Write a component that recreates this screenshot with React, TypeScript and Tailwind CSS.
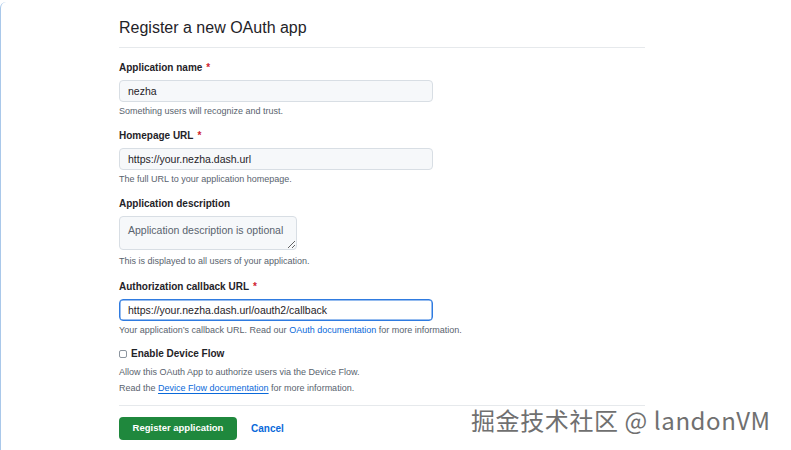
import React from "react";

const FONT = "font-['Liberation_Sans',Arial,sans-serif]";

type FieldProps = {
  label: string;
  required?: boolean;
  helper: React.ReactNode;
  children: React.ReactNode;
  className?: string;
  helperClass?: string;
};

const Field = ({ label, required, helper, children, className, helperClass }: FieldProps) => (
  <div className={className}>
    <div className="text-[10px] font-bold leading-[14px] text-[#1f2328]">
      {label}
      {required && <span className="ml-[4px] text-[#cf222e]">*</span>}
    </div>
    <div className="mt-[5px]">{children}</div>
    <div className={`${helperClass ?? "mt-[3px]"} text-[9px] leading-[12px] text-[#59636e]`}>{helper}</div>
  </div>
);

const inputBase =
  "block h-[22px] w-[314px] rounded-[4px] border px-[8px] text-[10.5px] text-[#1f2328] outline-none";

export default function App() {
  return (
    <div className={`${FONT} relative h-[450px] w-[791px] overflow-hidden bg-white`}>
      <div className="h-[448px] mt-[2px] rounded-tl-[6px] border-l border-[#a9c8ea]">
        <div className="ml-[118px] w-[526px]">
          <div className="border-b border-[#e6e9ec] pt-[16px] pb-[9px]">
            <h1 className="text-[16px] leading-[20px] text-[#1f2328]">Register a new OAuth app</h1>
          </div>

          <Field
            className="mt-[13px]"
            label="Application name"
            required
            helper="Something users will recognize and trust."
          >
            <input readOnly value="nezha" className={`${inputBase} border-[#d8dee4] bg-[#f6f8fa]`} />
          </Field>

          <Field
            className="mt-[12px]"
            label="Homepage URL"
            required
            helper="The full URL to your application homepage."
          >
            <input
              readOnly
              value="https://your.nezha.dash.url"
              className={`${inputBase} border-[#d8dee4] bg-[#f6f8fa]`}
            />
          </Field>

          <Field
            className="mt-[12px]"
            label="Application description"
            helperClass="mt-[5px]"
            helper="This is displayed to all users of your application."
          >
            <textarea
              readOnly
              placeholder="Application description is optional"
              className="block h-[34px] w-[178px] resize rounded-[4px] border border-[#d8dee4] bg-[#f6f8fa] px-[8px] pt-[6px] text-[10.5px] leading-[14px] text-[#1f2328] outline-none placeholder:text-[#59636e]"
            />
          </Field>

          <Field
            className="mt-[13px]"
            label="Authorization callback URL"
            required
            helper={
              <>
                Your application’s callback URL. Read our{" "}
                <span className="text-[#0969da]">OAuth documentation</span> for more information.
              </>
            }
          >
            <input
              readOnly
              value="https://your.nezha.dash.url/oauth2/callback"
              className={`${inputBase} border-[#2f7be0] bg-white shadow-[inset_0_0_0_0.5px_#2f7be0]`}
            />
          </Field>

          <div className="mt-[11px] flex items-center gap-[4px] text-[10px] font-bold leading-[14px] text-[#1f2328]">
            <span className="block h-[8px] w-[8px] rounded-[2px] border border-[#8c959f] bg-white" />
            <span>Enable Device Flow</span>
          </div>
          <div className="mt-[5px] text-[9px] leading-[12px] text-[#59636e]">
            Allow this OAuth App to authorize users via the Device Flow.
          </div>
          <div className="mt-[4px] text-[9px] leading-[12px] text-[#59636e]">
            Read the{" "}
            <span className="text-[#0969da] underline underline-offset-[2px]">Device Flow documentation</span> for
            more information.
          </div>

          <div className="mt-[11px] border-t border-[#e6e9ec]" />

          <div className="mt-[11px] flex items-center gap-[14px]">
            <button className="h-[23px] w-[118px] rounded-[4px] bg-[#1f883d] text-[9.5px] font-bold text-white">
              Register application
            </button>
            <span className="text-[10px] font-bold text-[#0969da]">Cancel</span>
          </div>
        </div>
      </div>

      <div className="absolute left-[471px] top-[404px] whitespace-pre font-['Noto_Sans_CJK_SC',sans-serif] text-[24px] leading-[32px] tracking-[0.6px] text-[#707070] [text-shadow:0_0_1px_#ffffff]">
        掘金技术社区 @ landonVM
      </div>
    </div>
  );
}
